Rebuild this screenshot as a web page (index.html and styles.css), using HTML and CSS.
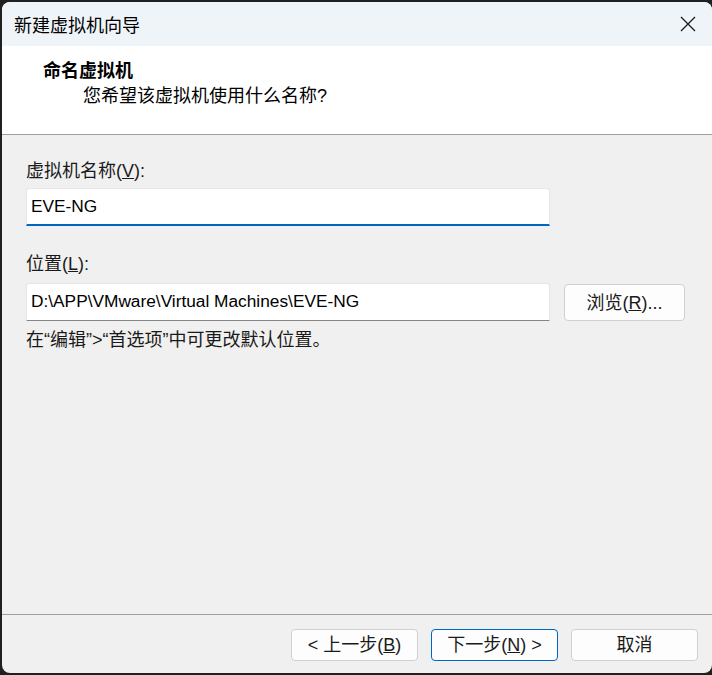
FILE: index.html
```html
<!DOCTYPE html>
<html lang="zh-CN">
<head>
<meta charset="utf-8">
<title>新建虚拟机向导</title>
<link rel="stylesheet" href="styles.css">
</head>
<body>
<div class="window">
  <div class="titlebar">
    <span class="title">新建虚拟机向导</span>
    <span class="close" aria-label="关闭">
      <svg width="16" height="16" viewBox="0 0 16 16"><path d="M1 1L15 15M15 1L1 15" stroke="#1a1a1a" stroke-width="1.3" fill="none"/></svg>
    </span>
  </div>
  <div class="header">
    <div class="h-title">命名虚拟机</div>
    <div class="h-sub">您希望该虚拟机使用什么名称?</div>
  </div>
  <div class="content">
    <div class="label">虚拟机名称(<u>V</u>):</div>
    <div class="input focused">EVE-NG</div>
    <div class="label second">位置(<u>L</u>):</div>
    <div class="row">
      <div class="input plain">D:\APP\VMware\Virtual Machines\EVE-NG</div>
      <div class="btn browse">浏览(<u>R</u>)...</div>
    </div>
    <div class="hint">在“编辑”&gt;“首选项”中可更改默认位置。</div>
  </div>
  <div class="footer">
    <div class="btn">&lt; 上一步(<u>B</u>)</div>
    <div class="btn primary">下一步(<u>N</u>) &gt;</div>
    <div class="btn">取消</div>
  </div>
</div>
</body>
</html>
```
FILE: styles.css
```css
html, body {
  margin: 0;
  padding: 0;
}
body {
  background: #202020;
  width: 712px;
  height: 675px;
  overflow: hidden;
  padding: 2px 0 0 2px;
  box-sizing: border-box;
  font-family: "Liberation Sans", "Noto Sans CJK SC", sans-serif;
  font-size: 18px;
  color: #1a1a1a;
}
.window {
  width: 710px;
  height: 671px;
  border-radius: 8px;
  overflow: hidden;
  background: #f0f0f0;
  display: flex;
  flex-direction: column;
}
.titlebar {
  height: 44px;
  flex: none;
  background: #eff4f9;
  display: flex;
  align-items: center;
  justify-content: space-between;
  padding: 0 16px 0 12px;
}
.title {
  font-family: "Noto Sans CJK SC", sans-serif;
  font-size: 18px;
  line-height: 24px;
  color: #000;
}
.close {
  display: flex;
  width: 16px;
  height: 16px;
}
.header {
  height: 88px;
  flex: none;
  background: #fff;
  border-bottom: 1px solid #a0a0a0;
  box-sizing: content-box;
  padding-left: 41px;
}
.h-title {
  font-family: "Noto Sans CJK SC", sans-serif;
  font-weight: 700;
  font-size: 18px;
  line-height: 24px;
  margin-top: 11px;
  color: #000;
}
.h-sub {
  font-family: "Liberation Sans", "Noto Sans CJK SC", sans-serif;
  font-size: 18px;
  line-height: 24px;
  margin-top: 3px;
  padding-left: 40px;
  color: #000;
}
.content {
  flex: 1;
  padding: 0 24px;
}
.label {
  line-height: 24px;
  margin-top: 24px;
  height: 24px;
}
.label.second {
  margin-top: 26px;
}
.input {
  box-sizing: border-box;
  width: 524px;
  height: 38px;
  background: #fff;
  border: 1px solid #e6e6e6;
  border-bottom: 1px solid #868686;
  border-radius: 3px 3px 0 0;
  padding: 0 4px;
  font-size: 17.3px;
  line-height: 34px;
  margin-top: 5px;
  color: #000;
  white-space: nowrap;
}
.input.focused {
  border-bottom: 2px solid #0067c0;
}
.row {
  display: flex;
  align-items: flex-start;
  gap: 14px;
  margin-top: 7px;
}
.row .input {
  margin-top: 0;
}
.btn {
  box-sizing: border-box;
  width: 127px;
  height: 32px;
  border: 1px solid #d0d0d0;
  border-radius: 4px;
  background: #fdfdfd;
  display: flex;
  align-items: center;
  justify-content: center;
  line-height: 24px;
  color: #1a1a1a;
}
.btn.browse {
  width: 121px;
  height: 37px;
  margin-top: 1px;
}
.btn.primary {
  border-color: #0067c0;
}
.hint {
  line-height: 24px;
  margin-top: 7px;
}
.footer {
  flex: none;
  height: 44px;
  border-top: 1px solid #a0a0a0;
  display: flex;
  justify-content: flex-end;
  align-items: flex-start;
  gap: 13px;
  padding: 14px 14px 0 0;
  box-sizing: content-box;
}
```
